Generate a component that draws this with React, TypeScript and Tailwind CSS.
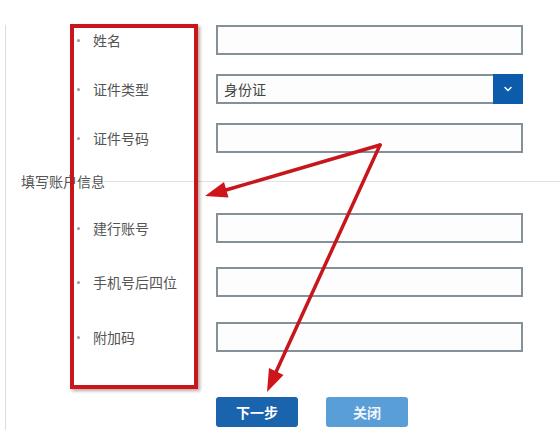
import React from 'react';
import { ChevronDown } from 'lucide-react';

const font = { fontFamily: '"Noto Sans CJK SC", "Noto Sans", sans-serif' };

const Label: React.FC<{ text: string }> = ({ text }) => (
  <div className="w-[210px] flex items-center pl-[71px] text-[14px] text-[#555]">
    <span className="w-[3px] h-[3px] rounded-full bg-[#9a9a9a] mr-[13px]" />
    {text}
  </div>
);

const Field: React.FC = () => (
  <div className="w-[307px] h-[30px] border-2 border-[#859198] bg-[#fdfdfd]" />
);

const Row: React.FC<{ label: string; className?: string; children?: React.ReactNode }> = ({ label, className, children }) => (
  <div className={`flex items-center h-[30px] ${className ?? ''}`}>
    <Label text={label} />
    {children ?? <Field />}
  </div>
);

const App: React.FC = () => {
  return (
    <div className="relative w-[560px] h-[437px] bg-white overflow-hidden" style={font}>
      <div className="ml-[5px] mt-[25px] h-[405px] border-l border-[#dcdcdc]">
        <Row label="姓名" />
        <Row label="证件类型" className="mt-[19px]">
          <div className="w-[307px] h-[30px] border-2 border-[#859198] bg-[#fdfdfd] flex items-center">
            <span className="flex-1 pl-[6px] text-[14px] text-[#444]">身份证</span>
            <div className="w-[30px] h-[30px] -mr-[2px] bg-[#0d5cab] flex items-center justify-center">
              <ChevronDown size={12} strokeWidth={3} color="#ffffff" />
            </div>
          </div>
        </Row>
        <Row label="证件号码" className="mt-[19px]" />

        <div className="mt-[21px] pl-[15px]">
          <div className="text-[14px] leading-[14px] text-[#555]">填写账户信息</div>
          <div className="-mt-[7px] border-t border-[#e2e2e2]" />
        </div>

        <Row label="建行账号" className="mt-[31px]" />
        <Row label="手机号后四位" className="mt-[24px]" />
        <Row label="附加码" className="mt-[25px]" />

        <div className="mt-[45px] flex pl-[210px] gap-[28px]">
          <button className="w-[82px] h-[30px] rounded-[3px] bg-[#1a63ad] text-white text-[14px] font-bold">
            下一步
          </button>
          <button className="w-[82px] h-[30px] rounded-[3px] bg-[#5a9ed8] text-[#eef5fc] text-[14px] font-bold">
            关闭
          </button>
        </div>
      </div>

      {/* annotation: red box */}
      <div className="absolute left-[70px] top-[24px] w-[128px] h-[365px] border-4 border-[#c8161d] shadow-[2px_2px_3px_rgba(80,0,0,0.35)] pointer-events-none" />

      {/* annotation: arrows */}
      <svg className="absolute inset-0 pointer-events-none" width="560" height="437" viewBox="0 0 560 437">
        <g stroke="#c8161d" strokeWidth="3.5" strokeLinecap="round" fill="none">
          <line x1="380" y1="145" x2="226" y2="190" />
          <line x1="380" y1="145" x2="276" y2="372" />
        </g>
        <polygon points="205,196 228.5,197.5 224,182" fill="#d0141c" />
        <polygon points="267,392 283.5,375 269,368" fill="#d0141c" />
      </svg>
    </div>
  );
};

export default App;
